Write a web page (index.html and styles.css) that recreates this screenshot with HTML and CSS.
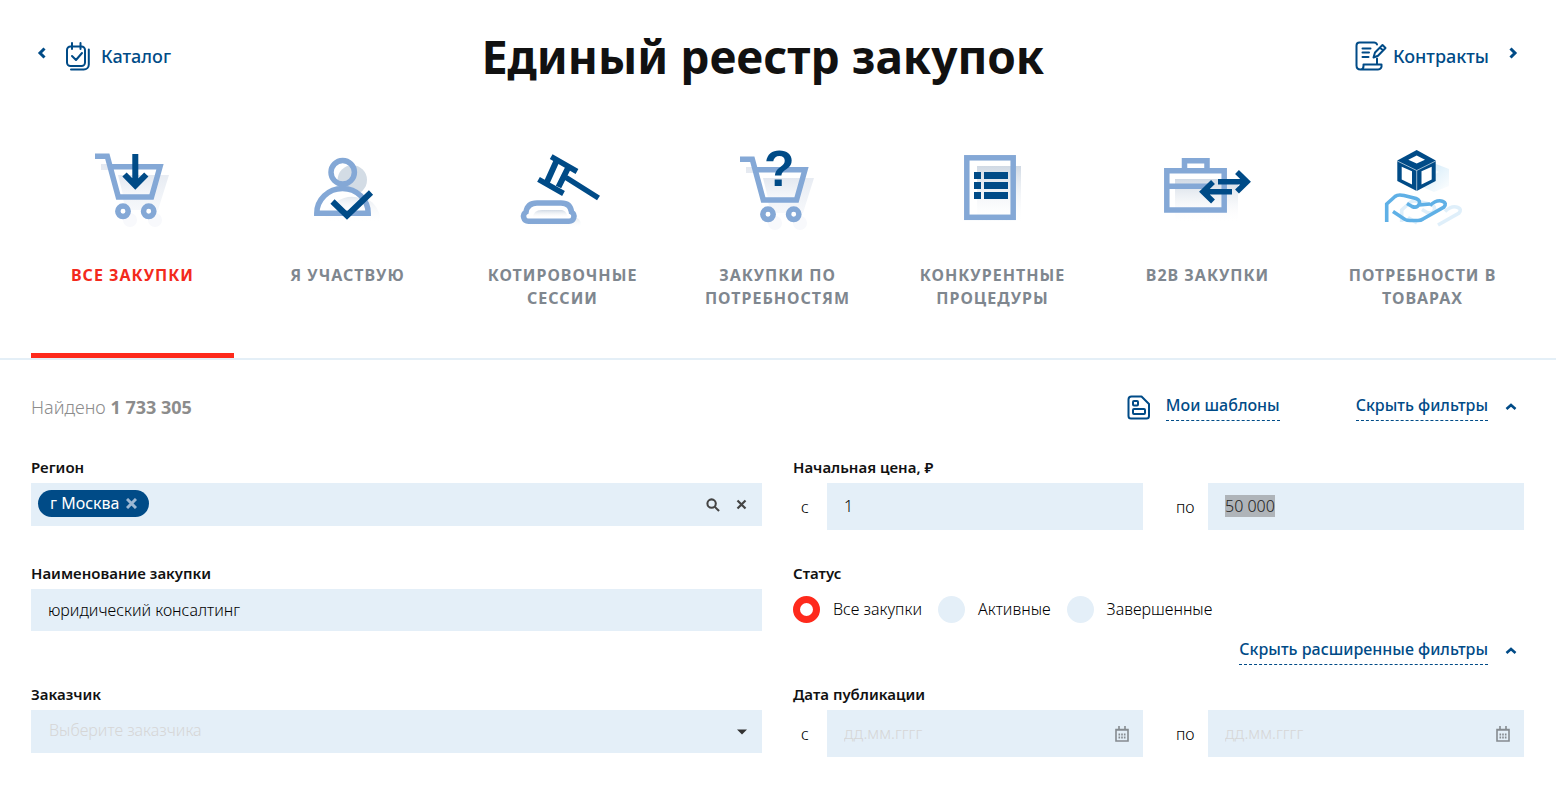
FILE: index.html
```html
<!DOCTYPE html>
<html lang="ru">
<head>
<meta charset="utf-8">
<title>Единый реестр закупок</title>
<meta name="viewport" content="width=device-width, initial-scale=1">
<link rel="stylesheet" href="styles.css">
</head>
<body>
<svg class="defs" aria-hidden="true">
  <defs>
    <linearGradient id="fade" x1="0" y1="0" x2="0" y2="1"><stop offset="0" stop-color="#d0d9e4"/><stop offset="1" stop-color="#fff" stop-opacity="0"/></linearGradient>
    <linearGradient id="fade-soft" x1="0" y1="0" x2="0" y2="1"><stop offset="0" stop-color="#e3e8f0"/><stop offset="1" stop-color="#f6f8fb"/></linearGradient>
    <linearGradient id="fade-blue" x1="0" y1="0" x2="1" y2="1"><stop offset="0" stop-color="#b9dff5"/><stop offset="1" stop-color="#fff"/></linearGradient>
  </defs>
  <symbol id="cart" viewBox="0 0 110 90" overflow="visible">
    <path fill="url(#fade-soft)" d="M21 24H33L36 35H89L78 70H46L35 30H21Z"/>
    <circle cx="50" cy="80" r="7" fill="#f8f9fc"/><circle cx="75" cy="80" r="7" fill="#f8f9fc"/>
    <path fill="#fff" d="M33 29H77L71 55H40Z"/>
    <path fill="url(#fade-soft)" d="M38 35H75L70 55H43Z"/>
    <g fill="none" stroke="#84a8d6" stroke-width="5.5"><path d="M15 16.3H27.3L38.3 57H71.5L80 26.7H31"/><circle cx="43" cy="71.3" r="5.2" fill="#fff"/><circle cx="68.7" cy="71.3" r="5.2" fill="#fff"/></g>
  </symbol>
</svg>

<header class="header">
  <a class="nav-link" href="#catalog">
    <svg class="arrow" width="10" height="12" viewBox="0 0 10 12"><path d="M7.500 1.500L3 6L7.500 10.500"/></svg>
    <svg class="nav-icon" width="26" height="29" viewBox="0 0 26 29"><rect x="2" y="4.500" width="18" height="19.500" rx="3.500"/><path d="M7 1v6M15.500 1v6M7 14l4 4 6-7M23.800 7.500V22.500a5 5 0 0 1-5 5H6"/></svg>
    <span>Каталог</span>
  </a>
  <h1 class="title">Единый реестр закупок</h1>
  <a class="nav-link nav-link-next" href="#contracts">
    <svg class="nav-icon" width="32" height="30" viewBox="0 0 32 30"><path d="M22 3.500C21.500 2 20.500 1.500 19 1.500H4.500C2.500 1.500 1.500 2.500 1.500 4.500V24.500C1.500 27 3 28.500 5.500 28.500H23C25.500 28.500 27 26.500 26.500 23.500H8.500V25C8.500 27 7.500 28.500 5.500 28.500M22 17.500V23M7.500 7.500h8M7.500 11.500h6.500M7.500 16h6"/><path d="M18.500 16.500L20 11.500L27.500 4L30.500 7L23 14.800ZM25 6.500L28 9.500"/></svg>
    <span>Контракты</span>
    <svg class="arrow" width="10" height="12" viewBox="0 0 10 12"><path d="M2.500 1.500L7 6L2.500 10.500"/></svg>
  </a>
</header>

<nav class="tabs">
  <a class="tab tab-active" href="#all">
    <svg class="tab-icon" viewBox="-3 0 111 90"><use href="#cart" width="110" height="90"/><path class="dark" d="M55.300 14V46M44.500 34.500L55.300 45.500L66.300 34.500"/></svg>
    <span>Все закупки</span>
  </a>
  <a class="tab" href="#mine">
    <svg class="tab-icon" viewBox="-8 0 111 90"><path fill="url(#fade)" opacity=".6" d="M24 83A28 28 0 0 1 81 83Z"/><circle cx="42.700" cy="32.300" r="11.700" fill="#fff"/><circle cx="52.300" cy="40" r="14.700" fill="#d3dce5"/><path fill="#fff" d="M16.800 73.300A25.700 24.800 0 0 1 68.200 73.300Z"/><path fill="url(#fade)" d="M26 74A28 28 0 0 1 68 62V74Z" opacity=".6"/><circle class="light" cx="42.700" cy="32.300" r="11.700"/><path class="light" d="M16.800 73.300A25.700 24.800 0 0 1 68.200 73.300Z"/><path class="dark" d="M32.500 61.500L47 75.500L71 52.500"/></svg>
    <span>Я участвую</span>
  </a>
  <a class="tab" href="#sessions">
    <svg class="tab-icon" viewBox="-3 0 111 90"><path fill="url(#fade)" opacity=".5" d="M20 88V78H67Q72 80 70 88Z"/><path class="light" fill="#fff" d="M18.500 81.300H59A5 5 0 0 0 61.500 72Q60.500 63 51 63H27Q17.500 63 16 72A5 5 0 0 0 18.500 81.300Z"/><path fill="url(#fade)" d="M23 78Q23 70 32 70H52Q56 71 57 75L60 78Z"/><path class="dark gavel" d="M41.200 16.700L67 31.500M28.500 39.300L53.500 53.500M56 37.500L88.500 58"/><path class="dark" d="M46.500 21L37 42M58 28L48.500 47"/></svg>
    <span>Котировочные сессии</span>
  </a>
  <a class="tab" href="#needs">
    <svg class="tab-icon" viewBox="-8 0 111 90"><use href="#cart" x="-5" y="3" width="110" height="90"/><text class="question" x="34" y="46">?</text></svg>
    <span>Закупки по потребностям</span>
  </a>
  <a class="tab" href="#competitive">
    <svg class="tab-icon" viewBox="-3 0 111 90"><rect x="37" y="26" width="44" height="58" fill="url(#fade)"/><rect class="light" x="26.800" y="17.800" width="46.400" height="59.500"/><path fill="#004b87" d="M34 32h7v7h-7zM44 32h24v7H44zM34 42h7v7h-7zM44 42h24v7H44zM34 52h7v7h-7zM44 52h24v7H44z"/></svg>
    <span>Конкурентные процедуры</span>
  </a>
  <a class="tab" href="#b2b">
    <svg class="tab-icon" viewBox="2 0 111 90"><rect x="25" y="39" width="63" height="44" fill="url(#fade)"/><path class="light" d="M16.800 30.800H74.200V69.900H16.800ZM17 46.300H58M34.500 29V20.800H57V29"/><path class="dark arrows" d="M68 41.700H97M87 32L97 41.700L87 51.500M82 51.700H53M63 42L53 51.700L63 61.500"/></svg>
    <span>B2B закупки</span>
  </a>
  <a class="tab" href="#goods">
    <svg class="tab-icon" viewBox="-3 0 111 90"><path fill="url(#fade-blue)" opacity=".75" d="M48 30L66 24L79 29V46L64 52L48 45Z"/><path fill="#fff" opacity=".6" d="M58 32l6-3 5 3-5 3z"/><g transform="translate(15 6)" opacity=".2"><path class="hand" d="M16.700 76V64L25 56.500Q28 54 34 55.500L46 58.500Q51 60.500 49 64.500Q47 68.500 42 66.500L37 63.500M23 71.500L32 77M53 79L74 67Q77 63 73 61.500Q67 59 60 65.500"/></g><path class="hand" d="M16.700 82V64L25 56.500Q28 54 34 55.500L46 58.500Q51 60.500 49 64.500Q47 68.500 42 66.500L37 63.500M23 71.500L35 79.500Q37 80.500 40 80.500H48Q51 80.500 53 79L74 67Q77 63 73 61.500Q67 59 60 65.500M49 65L60 64"/><path fill="#004b87" d="M46.700 10L65.700 20.500V41L46.700 51L27.300 41V20.500Z"/><path fill="#fff" d="M46.700 15.500L55 19.700L46.700 23.500L38.300 19.700ZM31.700 26.700L42 31.200V44.500L31.700 39.500ZM51.500 31.200L61.700 26.700V39.500L51.500 44.500Z"/><path fill="none" stroke="#fff" stroke-width=".6" d="M27.300 21L46.700 30.500L65.700 21M46.700 30.500V51"/></svg>
    <span>Потребности в товарах</span>
  </a>
</nav>

<main class="content">
  <div class="toolbar">
    <p class="found">Найдено <b>1 733 305</b></p>
    <a class="templates" href="#templates">
      <svg class="nav-icon" width="24" height="25" viewBox="0 0 24 25"><path d="M4.500 1.500H14.500L22 9V21Q22 23.500 19.500 23.500H4Q1.500 23.500 1.500 21V4.500Q1.500 1.500 4.500 1.500Z"/><rect x="6" y="6" width="5" height="4.500" rx="1"/><rect x="6" y="14" width="12" height="5" rx="1"/></svg>
      <span class="dashed">Мои шаблоны</span>
    </a>
    <button class="toggle" type="button"><span class="dashed">Скрыть фильтры</span><svg class="arrow" width="12" height="10" viewBox="0 0 12 10"><path d="M1.500 7L6 3L10.500 7"/></svg></button>
  </div>

  <form class="filters">
    <div class="field">
      <label class="label" for="region">Регион</label>
      <div class="box">
        <span class="chip">г Москва<button type="button" aria-label="Убрать"><svg width="11" height="11" viewBox="0 0 11 11"><path d="M1 1l9 9M10 1l-9 9"/></svg></button></span>
        <input class="bare" id="region" type="text">
        <button class="tool" type="button" aria-label="Найти"><svg width="14" height="14" viewBox="0 0 15 15"><circle cx="6" cy="6" r="4.500"/><path d="M9.500 9.500L14 14"/></svg></button>
        <button class="tool" type="button" aria-label="Очистить"><svg width="11" height="11" viewBox="0 0 11 11"><path d="M1.500 1.500l8 8M9.500 1.500l-8 8"/></svg></button>
      </div>
    </div>
    <fieldset class="field">
      <legend class="label">Начальная цена, ₽</legend>
      <div class="range">
        <label for="price-from">с</label><input class="input input-raised" id="price-from" type="text" value="1">
        <label for="price-to">по</label><input class="input input-raised" id="price-to" type="text" value="50 000">
      </div>
    </fieldset>

    <div class="field">
      <label class="label" for="name">Наименование закупки</label>
      <input class="input input-name" id="name" type="text" value="юридический консалтинг">
    </div>
    <fieldset class="field">
      <legend class="label">Статус</legend>
      <div class="radios">
        <label><input type="radio" name="status" checked>Все закупки</label>
        <label><input type="radio" name="status">Активные</label>
        <label><input type="radio" name="status">Завершенные</label>
      </div>
    </fieldset>

    <div class="extended">
      <button class="toggle" type="button"><span class="dashed">Скрыть расширенные фильтры</span><svg class="arrow" width="12" height="10" viewBox="0 0 12 10"><path d="M1.500 7L6 3L10.500 7"/></svg></button>
    </div>

    <div class="field">
      <label class="label" for="customer">Заказчик</label>
      <div class="box select-box">
        <select id="customer"><option>Выберите заказчика</option></select>
        <svg width="10" height="6" viewBox="0 0 10 6"><path d="M0 .5h10L5 5.500z"/></svg>
      </div>
    </div>
    <fieldset class="field">
      <legend class="label">Дата публикации</legend>
      <div class="range">
        <label for="date-from">с</label>
        <div class="date"><input class="input input-raised" id="date-from" type="text" placeholder="дд.мм.гггг"><svg width="14" height="16" viewBox="0 0 14 16"><path d="M1 3.500h12v11.500H1zM1 4h12M4 0v4M10 0v4"/><path class="dots" d="M3.500 8.500h7M3.500 11.500h7"/></svg></div>
        <label for="date-to">по</label>
        <div class="date"><input class="input input-raised" id="date-to" type="text" placeholder="дд.мм.гггг"><svg width="14" height="16" viewBox="0 0 14 16"><path d="M1 3.500h12v11.500H1zM1 4h12M4 0v4M10 0v4"/><path class="dots" d="M3.500 8.500h7M3.500 11.500h7"/></svg></div>
      </div>
    </fieldset>
  </form>
</main>
<script src="script.js"></script>
</body>
</html>
```

FILE: styles.css
```css
* { box-sizing: border-box; }

body {
  margin: 0;
  background: #fff;
  color: #000;
  font: 300 16px/24px "Noto Sans", sans-serif;
}

a { color: #004b87; text-decoration: none; }
button { padding: 0; border: 0; background: none; font: inherit; color: inherit; cursor: pointer; }
svg { flex: none; }
.defs { position: absolute; width: 0; height: 0; }

.header {
  display: flex;
  justify-content: space-between;
  align-items: center;
  padding: 24px 32px 0 31px;
}
.title { margin: 0; color: #111; font: 700 46px/64px "Noto Sans", sans-serif; }
.nav-link {
  display: flex;
  align-items: center;
  gap: 10px;
  padding-left: 6px;
  font: 500 18px/28px "Noto Sans", sans-serif;
}
.nav-link .arrow { margin: 0 8px 6px 0; }
.nav-link-next { gap: 6px; padding: 0; }
.nav-link-next .arrow { margin: 0 6px 6px 13px; }
.arrow { fill: none; stroke: #004b87; stroke-width: 3; }
.nav-icon { fill: none; stroke: #004b87; stroke-width: 2; stroke-linecap: round; stroke-linejoin: round; }

.tabs {
  display: grid;
  grid-template-columns: repeat(7, 1fr);
  gap: 12px;
  padding: 52px 32px 0 31px;
  border-bottom: 2px solid #e4eff7;
}
.tab {
  display: flex;
  flex-direction: column;
  align-items: center;
  padding: 0 24px 43px;
  border-bottom: 5px solid transparent;
  color: #7f878f;
  font: 700 16px/23px "Noto Sans", sans-serif;
  letter-spacing: 1px;
  text-align: center;
  text-transform: uppercase;
}
.tab-active { border-color: #fe2a1c; color: #f32a1c; }
.tab-icon { width: 111px; height: 90px; margin-bottom: 34px; }
.dark { fill: none; stroke: #004b87; stroke-width: 6; }
.gavel { stroke-width: 5.5; }
.arrows { stroke-width: 5.5; }
.light { stroke: #84a8d6; stroke-width: 5.5; }
.light:not([fill]) { fill: none; }
.hand { fill: none; stroke: #5fb0e6; stroke-width: 3.6; }
.question { fill: #004b87; font: 700 50px "Liberation Sans", sans-serif; letter-spacing: 0; }

.content { padding: 28px 32px 45px 31px; }
.toolbar { display: flex; align-items: center; height: 38px; margin-bottom: 31px; }
.found { flex: 1; margin: 0; color: #8c8c8c; font-size: 18px; }
.found b { font-weight: 700; }
.templates { display: flex; align-items: center; gap: 15px; margin-right: 76px; }
.toggle { display: flex; align-items: center; gap: 17px; padding-right: 7px; color: #004b87; }
.toggle, .templates { font: 500 16px/24px "Noto Sans", sans-serif; }
.dashed { padding-bottom: 3px; border-bottom: 1px dashed #004b87; }
.toggle .arrow { stroke-width: 2.6; }

.filters { display: grid; grid-template-columns: 1fr 1fr; column-gap: 31px; }
.field { min-width: 0; margin: 0 0 33px; padding: 0; border: 0; }
.label { display: block; padding: 0; margin-bottom: 6px; color: #111; font-size: 15px; font-weight: 600; line-height: 20px; }
.box { display: flex; align-items: center; height: 43px; padding: 0 15px 0 7px; background: #e4eff8; }
.chip { display: flex; align-items: center; gap: 6px; padding: 0 12px; border-radius: 14px; background: #004b87; color: #fff; font-weight: 400; line-height: 27px; margin-bottom: 3px; }
.chip button { display: flex; }
.chip svg { stroke: #9db8d3; stroke-width: 3; }
.bare { flex: 1; min-width: 0; border: 0; outline: 0; background: none; font: inherit; }
.tool { display: flex; margin-left: 16px; }
.tool svg { fill: none; stroke: #444; stroke-width: 2.2; }

.input { width: 100%; height: 47px; padding: 0 17px; border: 0; border-radius: 0; outline: 0; background: #e4eff8; color: #000; font: inherit; }
.input::placeholder { color: #d6d6d6; opacity: 1; }
.input::selection { background: rgba(174, 179, 184, 0.99); color: #222; }
.input-raised { padding-bottom: 2px; }
.input-name { height: 42px; display: block; }
.range { display: grid; grid-template-columns: 34px 1fr 65px 1fr; align-items: center; }
.range label { padding-left: 8px; }
.range label:nth-of-type(2) { padding-left: 33px; }

.radios { display: flex; gap: 16px; padding-top: 7px; }
.radios label { display: flex; align-items: center; gap: 13px; line-height: 27px; }
.radios input { appearance: none; width: 27px; height: 27px; margin: 0; border-radius: 50%; background: #e4eff8; }
.radios input:checked { border: 7px solid #fe2a1c; background: #fff; }

.extended { grid-column: 1 / -1; display: flex; justify-content: flex-end; margin: -27px 0 19px; }
.select-box { padding: 0; display: grid; align-items: center; }
.select-box select { grid-area: 1 / 1; height: 43px; padding: 0 18px 3px; border: 0; background: none; appearance: none; color: #d6d6d6; font: inherit; }
.select-box svg { grid-area: 1 / 1; justify-self: end; margin-right: 15px; fill: #333; pointer-events: none; }
.date { display: grid; align-items: center; }
.date input, .date svg { grid-area: 1 / 1; }
.date svg { justify-self: end; margin-right: 14px; fill: none; stroke: #858b90; stroke-width: 1.6; pointer-events: none; }
.date .dots { stroke-width: 2; stroke-dasharray: 1.6 1.1; }
```

FILE: script.js
```js
const priceTo = document.getElementById('price-to');
priceTo.focus();
priceTo.select();
```
